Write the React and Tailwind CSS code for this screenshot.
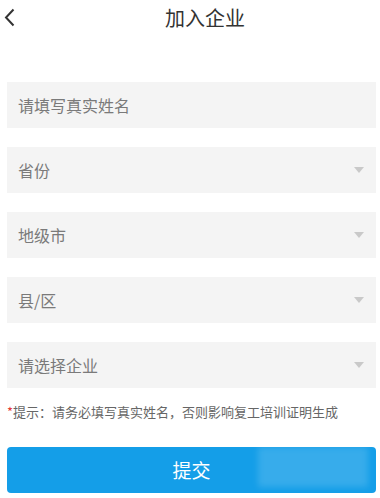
import React from 'react';

const fields = [
    { label: '请填写真实姓名', select: false },
    { label: '省份', select: true },
    { label: '地级市', select: true },
    { label: '县/区', select: true },
    { label: '请选择企业', select: true },
];

export default function App() {
    return (
        <div
            className="w-[380px] h-[498px] bg-white overflow-hidden"
            style={{ fontFamily: '"Noto Sans CJK SC", "Noto Sans", sans-serif' }}
        >
            {/* Header */}
            <div className="relative h-[36px] flex items-center">
                <svg className="absolute left-[4px] top-[8px]" width="11" height="19" viewBox="0 0 11 19">
                    <path d="M9.5 1.5 L2 9.5 L9.5 17.5" fill="none" stroke="#333" strokeWidth="2" />
                </svg>
                <div className="w-full text-center pl-[30px] text-[20px] text-[#333] leading-none">加入企业</div>
            </div>

            {/* Fields */}
            <div className="mt-[46px] ml-[7px] w-[369px] flex flex-col gap-[19px]">
                {fields.map((f) => (
                    <div key={f.label} className="h-[46px] bg-[#f4f4f4] flex items-center justify-between pl-[11px] pr-[12px]">
                        <span className="text-[16px] text-[#7a7a7a]">{f.label}</span>
                        {f.select && (
                            <svg width="10" height="6" viewBox="0 0 10 6">
                                <path d="M0 0 L10 0 L5 6 Z" fill="#c9c9c9" />
                            </svg>
                        )}
                    </div>
                ))}
            </div>

            {/* Hint */}
            <div className="mt-[15px] ml-[7px] text-[13px] text-[#666] leading-[17px]">
                <span className="text-[#e23a3a]">*</span>提示：请务必填写真实姓名，否则影响复工培训证明生成
            </div>

            {/* Submit */}
            <button className="relative mt-[27px] ml-[7px] w-[369px] h-[46px] rounded-[4px] bg-[#149ee8] text-white text-[19px] overflow-hidden">
                提交
                <span className="absolute right-[8px] top-0 w-[110px] h-[40px] bg-white/15 blur-[3px]" />
            </button>
        </div>
    );
}
